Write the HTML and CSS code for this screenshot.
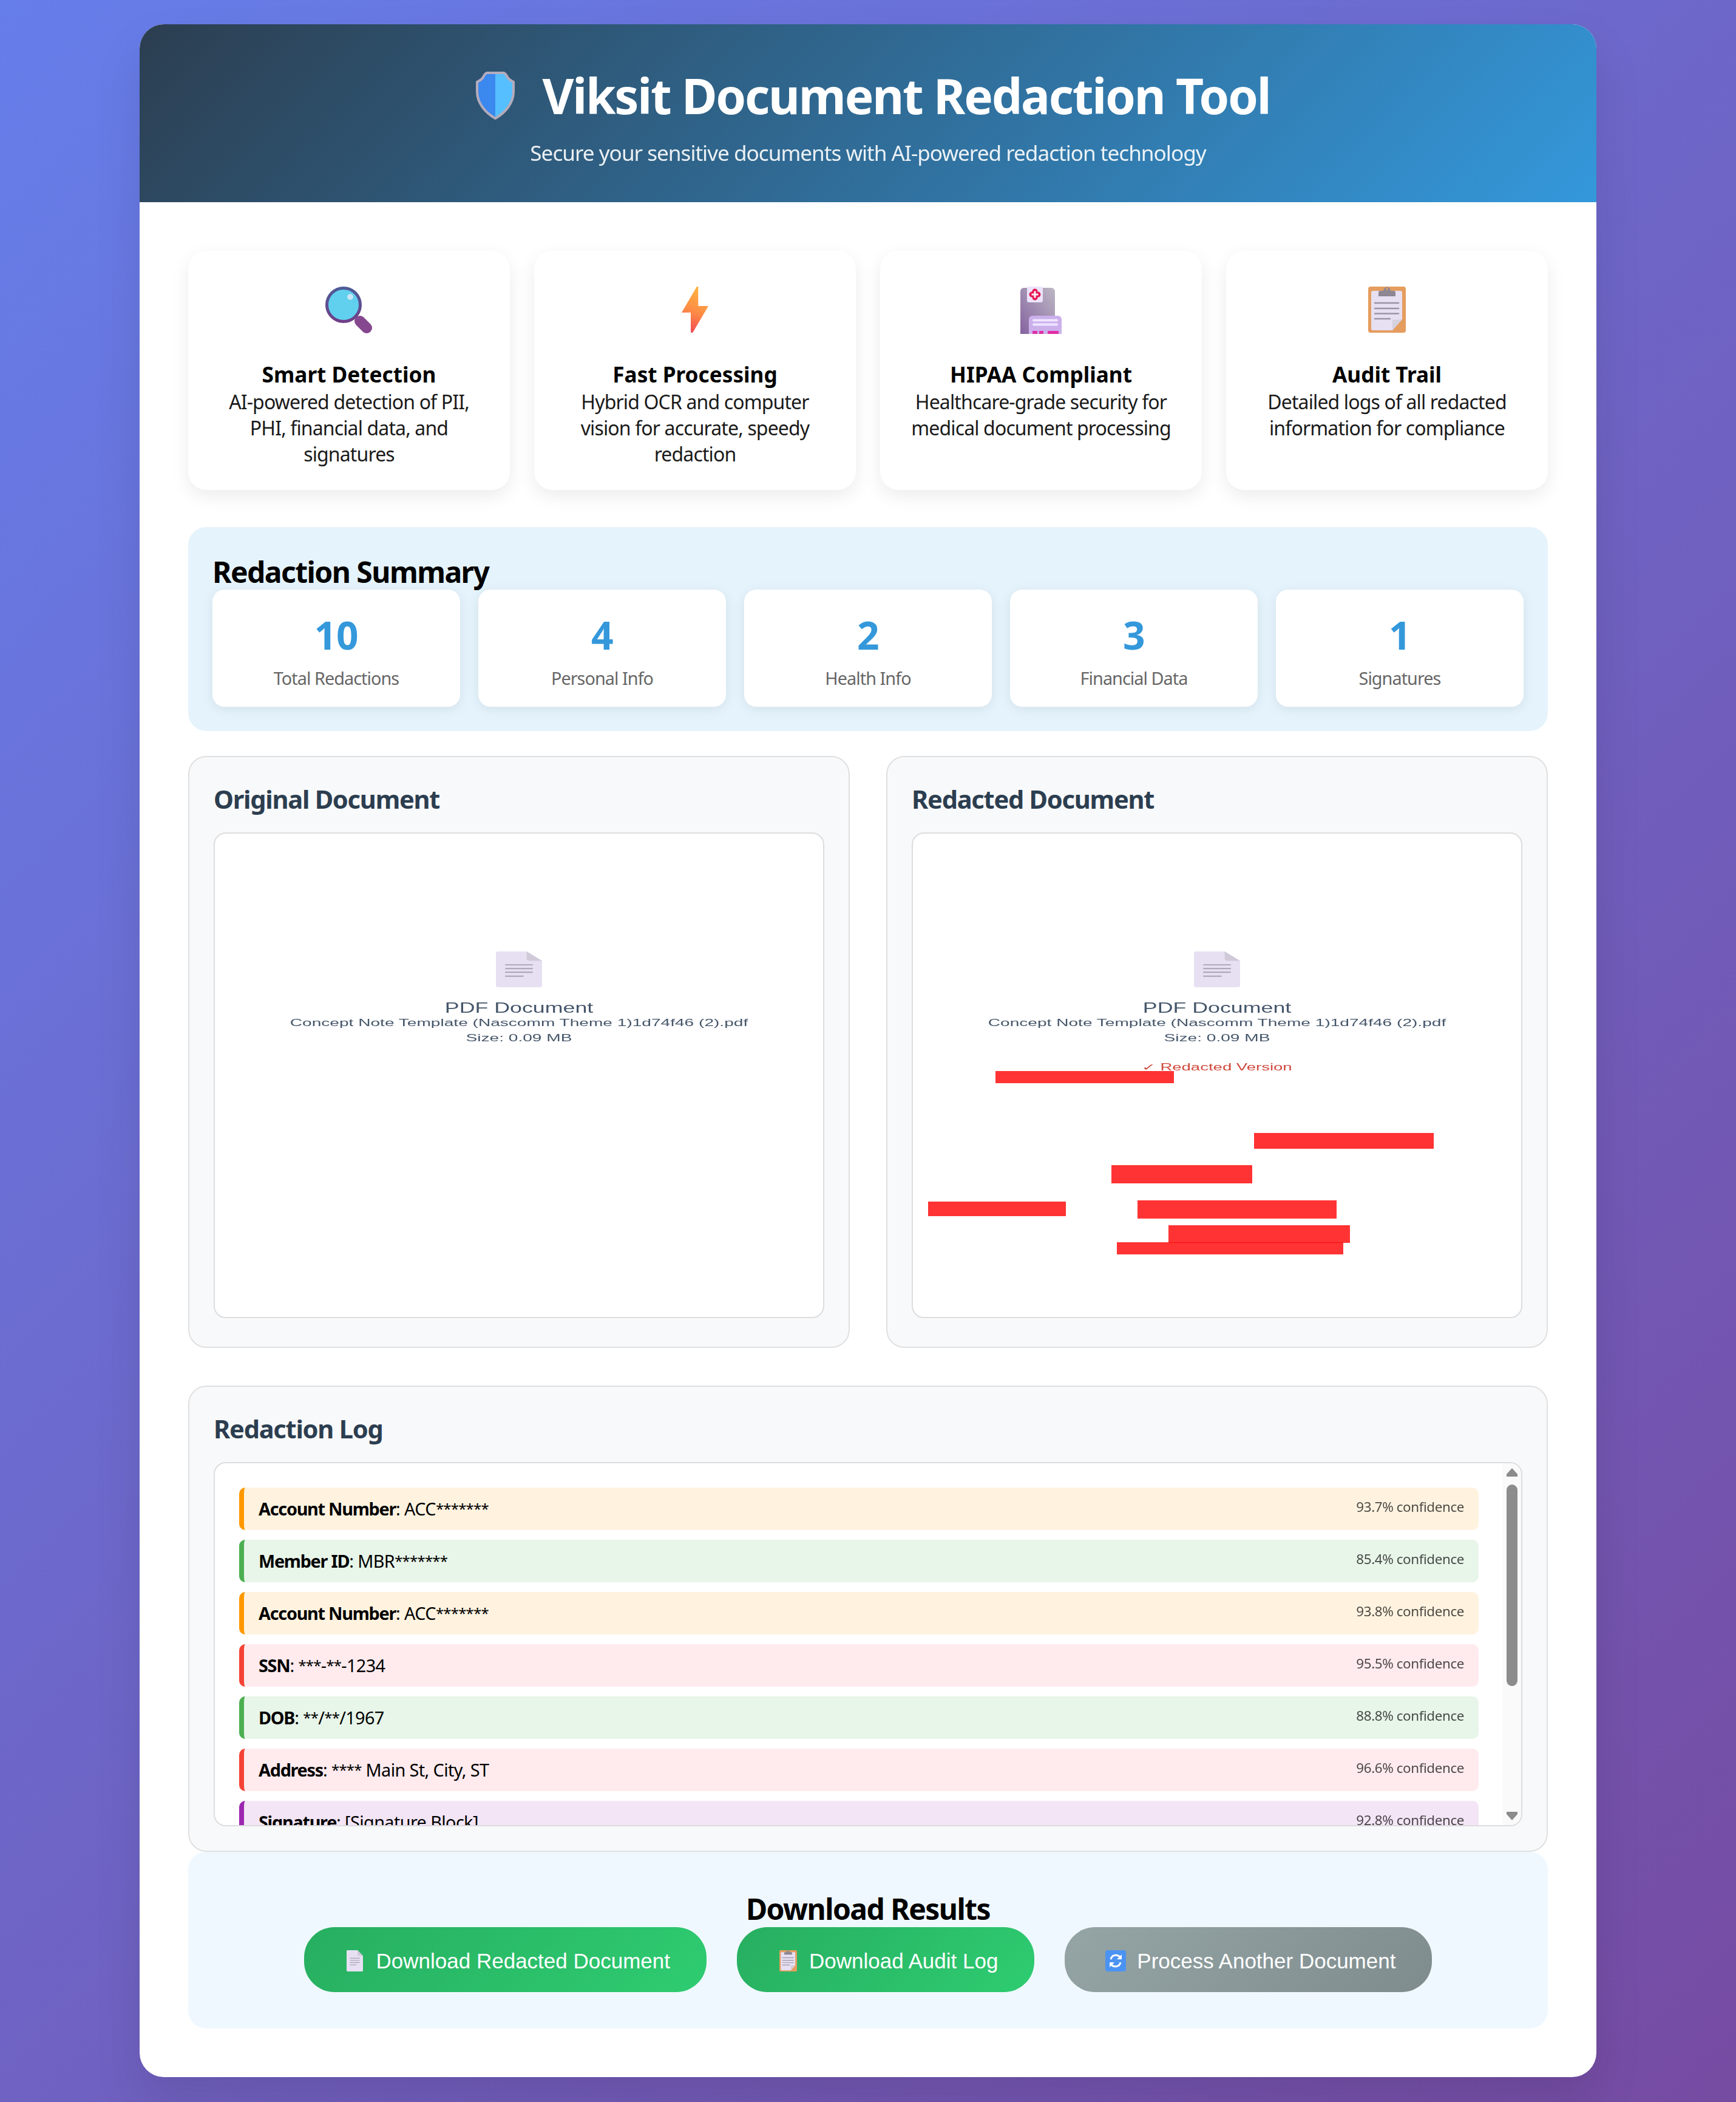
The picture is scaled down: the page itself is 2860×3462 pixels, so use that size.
FILE: index.html

```html
<!DOCTYPE html>
<html lang="en">
<head>
  <meta charset="UTF-8" />
  <meta name="viewport" content="width=device-width, initial-scale=1.0"/>
  <title>Viksit Document Redaction Tool</title>
  <link rel="stylesheet" href="styles.css">
</head>
<body>
  <svg class="icon-defs" aria-hidden="true">
    <defs>
      <linearGradient id="shieldFill" x1="0" y1="0" x2="1" y2="0">
        <stop offset="0.5" stop-color="#3b88ef"/>
        <stop offset="0.5" stop-color="#55bfff"/>
      </linearGradient>
      <linearGradient id="lensRing" x1="0" y1="0" x2="0" y2="1">
        <stop offset="0" stop-color="#4d5c97"/>
        <stop offset="1" stop-color="#703f88"/>
      </linearGradient>
      <linearGradient id="boltFill" x1="0.6" y1="0" x2="0.4" y2="1">
        <stop offset="0" stop-color="#ffb340"/>
        <stop offset="0.55" stop-color="#fd8c46"/>
        <stop offset="1" stop-color="#f14c52"/>
      </linearGradient>
      <linearGradient id="hospitalFill" x1="0" y1="1" x2="1" y2="0">
        <stop offset="0" stop-color="#85629f"/>
        <stop offset="1" stop-color="#bdb8c4"/>
      </linearGradient>
      <symbol id="docIcon" viewBox="0 0 30 36" preserveAspectRatio="none">
        <path d="M1.5 0H20L30 9.5V34.5A1.5 1.5 0 0 1 28.5 36H1.5A1.5 1.5 0 0 1 0 34.500V1.500A1.500 1.500 0 0 1 1.500 0Z" fill="#e6e0f2"/>
        <path d="M20 0L30 9.500H22A2 2 0 0 1 20 7.500Z" fill="#cfc9d8"/>
        <path d="M6 13.500H24M6 17.200H24M6 20.900H24M6 24.800H18" stroke="#a8a2b2" stroke-width="1.200" fill="none"/>
      </symbol>
      <symbol id="clipboardIcon" viewBox="0 0 62 76" preserveAspectRatio="none">
        <rect width="62" height="76" rx="4" fill="#e59d5f"/>
        <path d="M8 7H53A3 3 0 0 1 56 10V54L40 72H8A3 3 0 0 1 5 69V10A3 3 0 0 1 8 7Z" fill="#e6e0f2"/>
        <path d="M40 55L56 54L40 72Z" fill="#d5d0de"/>
        <path d="M17 10A3 3 0 0 1 20 7H25A6 6 0 1 1 37 7H42A3 3 0 0 1 45 10V16H17Z" fill="#8d8794"/>
        <circle cx="31" cy="4" r="1.800" fill="#e59d5f"/>
        <path d="M11 27H50M11 36H50M11 44.500H50M11 53H36" stroke="#9a94a4" stroke-width="2.600" stroke-linecap="round" fill="none"/>
      </symbol>
    </defs>
  </svg>

  <div class="container">
    <header class="header">
      <h1 class="title">
        <svg class="shield-icon" viewBox="0 0 64 79">
          <path d="M19 2H45C49 2 50 6 52 9C54 13 58 15 62 17V33C62 52 48 68 32 77C16 68 2 52 2 33V17C6 15 10 13 12 9C14 6 15 2 19 2Z" fill="url(#shieldFill)" stroke="#b4acbc" stroke-width="4"/>
        </svg>
        Viksit Document Redaction Tool
      </h1>
      <p class="subtitle">Secure your sensitive documents with AI-powered redaction technology</p>
    </header>

    <main class="content">
      <section class="features">
        <div class="feature-card">
          <div class="feature-icon">
            <svg class="icon-search" viewBox="0 0 78 78">
              <path d="M57 57L68 68" stroke="#85478d" stroke-width="18" stroke-linecap="round"/>
              <circle cx="30" cy="30" r="27.500" fill="#61cfee" stroke="url(#lensRing)" stroke-width="5"/>
              <ellipse cx="41" cy="17" rx="5" ry="5" fill="#c9e6f5"/>
            </svg>
          </div>
          <h3>Smart Detection</h3>
          <p>AI-powered detection of PII, PHI, financial data, and signatures</p>
        </div>
        <div class="feature-card">
          <div class="feature-icon">
            <svg class="icon-bolt" viewBox="0 0 44 76">
              <path d="M27.300 0V32H44L18.300 75.700H15V42.700H0L25 0Z" fill="url(#boltFill)"/>
            </svg>
          </div>
          <h3>Fast Processing</h3>
          <p>Hybrid OCR and computer vision for accurate, speedy redaction</p>
        </div>
        <div class="feature-card">
          <div class="feature-icon">
            <svg class="icon-hospital" viewBox="0 0 68 78">
              <path d="M6 2H51A6 6 0 0 1 57 8V78H0V8A6 6 0 0 1 6 2Z" fill="url(#hospitalFill)"/>
              <path d="M20 48H62A6 6 0 0 1 68 54V78H14V54A6 6 0 0 1 20 48Z" fill="#cbb0ec"/>
              <path d="M22 55.500H60M22 62.500H60" stroke="#efe4ff" stroke-width="4" stroke-linecap="round"/>
              <path d="M20 73H28V78H20ZM31 73H38V78H31ZM45 73H63V78H45Z" fill="#e02ea8"/>
              <rect x="11" width="26" height="26" rx="3" fill="#ece3fa"/>
              <path d="M19 13H29M24 8V18" stroke="#e8144f" stroke-width="9" stroke-linecap="round"/>
              <path d="M18.500 13H29.500M24 7.500V18.500" stroke="#f6eefb" stroke-width="3.200"/>
            </svg>
          </div>
          <h3>HIPAA Compliant</h3>
          <p>Healthcare-grade security for medical document processing</p>
        </div>
        <div class="feature-card">
          <div class="feature-icon">
            <svg class="icon-clipboard"><use href="#clipboardIcon"/></svg>
          </div>
          <h3>Audit Trail</h3>
          <p>Detailed logs of all redacted information for compliance</p>
        </div>
      </section>

      <section class="summary">
        <h3>Redaction Summary</h3>
        <div class="stats">
          <div class="stat-card"><div class="stat-number">10</div><div class="stat-label">Total Redactions</div></div>
          <div class="stat-card"><div class="stat-number">4</div><div class="stat-label">Personal Info</div></div>
          <div class="stat-card"><div class="stat-number">2</div><div class="stat-label">Health Info</div></div>
          <div class="stat-card"><div class="stat-number">3</div><div class="stat-label">Financial Data</div></div>
          <div class="stat-card"><div class="stat-number">1</div><div class="stat-label">Signatures</div></div>
        </div>
      </section>

      <section class="documents">
        <div class="panel doc-panel">
          <h3 class="panel-title">Original Document</h3>
          <div class="pdf-preview">
            <svg class="pdf-icon"><use href="#docIcon"/></svg>
            <div class="pdf-title">PDF Document</div>
            <div class="pdf-line">Concept Note Template (Nascomm Theme 1)1d74f46 (2).pdf</div>
            <div class="pdf-line">Size: 0.09 MB</div>
          </div>
        </div>
        <div class="panel doc-panel">
          <h3 class="panel-title">Redacted Document</h3>
          <div class="pdf-preview">
            <svg class="pdf-icon"><use href="#docIcon"/></svg>
            <div class="pdf-title">PDF Document</div>
            <div class="pdf-line">Concept Note Template (Nascomm Theme 1)1d74f46 (2).pdf</div>
            <div class="pdf-line">Size: 0.09 MB</div>
            <div class="pdf-line pdf-redacted">✓ Redacted Version</div>
            <span class="mark mark-1"></span>
            <span class="mark mark-2"></span>
            <span class="mark mark-3"></span>
            <span class="mark mark-4"></span>
            <span class="mark mark-5"></span>
            <span class="mark mark-6"></span>
            <span class="mark mark-7"></span>
          </div>
        </div>
      </section>

      <section class="panel log-panel">
        <h3 class="panel-title">Redaction Log</h3>
        <div class="log-box">
          <div class="log-list">
            <div class="log-row financial"><span><strong>Account Number</strong>: ACC<span class="mask">*******</span></span><span class="confidence">93.7% confidence</span></div>
            <div class="log-row health"><span><strong>Member ID</strong>: MBR<span class="mask">*******</span></span><span class="confidence">85.4% confidence</span></div>
            <div class="log-row financial"><span><strong>Account Number</strong>: ACC<span class="mask">*******</span></span><span class="confidence">93.8% confidence</span></div>
            <div class="log-row personal"><span><strong>SSN</strong>: <span class="mask">***</span>-<span class="mask">**</span>-1234</span><span class="confidence">95.5% confidence</span></div>
            <div class="log-row health"><span><strong>DOB</strong>: <span class="mask">**</span>/<span class="mask">**</span>/1967</span><span class="confidence">88.8% confidence</span></div>
            <div class="log-row personal"><span><strong>Address</strong>: <span class="mask">****</span> Main St, City, ST</span><span class="confidence">96.6% confidence</span></div>
            <div class="log-row signature"><span><strong>Signature</strong>: [Signature Block]</span><span class="confidence">92.8% confidence</span></div>
          </div>
          <div class="scrollbar">
            <svg class="scroll-arrow" viewBox="0 0 18 14"><path d="M9 0L18 10V14H0V10Z" fill="#8c8c8c"/></svg>
            <div class="scroll-thumb"></div>
            <svg class="scroll-arrow scroll-down" viewBox="0 0 18 14"><path d="M9 14L18 4V0H0V4Z" fill="#8c8c8c"/></svg>
          </div>
        </div>
      </section>

      <section class="downloads">
        <h3>Download Results</h3>
        <div class="download-buttons">
          <button class="btn btn-green">
            <span class="btn-icon"><svg class="btn-doc"><use href="#docIcon"/></svg></span>Download Redacted Document
          </button>
          <button class="btn btn-green">
            <span class="btn-icon"><svg class="btn-clip"><use href="#clipboardIcon"/></svg></span>Download Audit Log
          </button>
          <button class="btn btn-gray">
            <span class="btn-icon">
              <svg class="btn-refresh" viewBox="0 0 34 35">
                <rect width="34" height="35" rx="4" fill="#4b93f2"/>
                <path d="M9 15A8.500 8.500 0 0 1 25 13M25 20A8.500 8.500 0 0 1 9 22" stroke="#fff" stroke-width="3" fill="none"/>
                <path d="M27 7V15H19ZM7 28V20H15Z" fill="#fff"/>
              </svg>
            </span>Process Another Document
          </button>
        </div>
      </section>
    </main>
  </div>
</body>
</html>
```

FILE: styles.css

```css
* {
  margin: 0;
  padding: 0;
  box-sizing: border-box;
}

body {
  font-family: "Noto Sans", sans-serif;
  background: linear-gradient(135deg, #667eea 0%, #764ba2 100%);
  padding: 40px;
  min-height: 3462px;
}

.icon-defs {
  position: absolute;
  width: 0;
  height: 0;
}

.container {
  max-width: 2400px;
  margin: auto;
  background: #fff;
  border-radius: 40px;
  overflow: hidden;
  box-shadow: 0 40px 80px rgba(0,0,0,0.1);
}

.header {
  background: linear-gradient(135deg, #2c3e50 0%, #3498db 100%);
  color: #fff;
  text-align: center;
  padding: 64px 60px 0;
  height: 293px;
}

.title {
  display: flex;
  justify-content: center;
  align-items: center;
  gap: 46px;
  padding-left: 16px;
  font-size: 80px;
  line-height: 106px;
  font-weight: 700;
  letter-spacing: -2.24px;
  margin-bottom: 18px;
}

.shield-icon {
  width: 64px;
  height: 79px;
}

.subtitle {
  font-size: 35.2px;
  line-height: 47px;
  letter-spacing: -1.03px;
  opacity: 0.9;
}

.content {
  padding: 80px;
}

.features {
  display: grid;
  grid-template-columns: repeat(4, 1fr);
  gap: 40px;
  margin-bottom: 61px;
}

.feature-card {
  background: #fff;
  border-radius: 30px;
  padding: 40px;
  height: 394px;
  text-align: center;
  box-shadow: 0 10px 30px rgba(0,0,0,0.08);
}

.feature-icon {
  height: 139px;
  padding-top: 19px;
}

.feature-icon svg {
  display: block;
  margin: 0 auto;
}

.icon-search { width: 78px; height: 78px; }
.icon-bolt { width: 44px; height: 76px; }
.icon-hospital { width: 68px; height: 78px; }
.icon-clipboard { width: 62px; height: 76px; }

.feature-card h3 {
  font-size: 35.2px;
  line-height: 48px;
  font-weight: 700;
  color: #000;
}

.feature-card p {
  font-size: 32px;
  line-height: 43px;
  letter-spacing: -0.87px;
  color: #1a1a1a;
}

.summary {
  background: #e5f3fc;
  border-radius: 30px;
  padding: 40px;
  margin-bottom: 41px;
}

.summary h3,
.downloads h3 {
  font-size: 48px;
  font-weight: 700;
  letter-spacing: -1.55px;
  color: #000;
  padding-top: 4px;
}

.summary h3 {
  line-height: 59px;
}

.downloads h3 {
  line-height: 60px;
}

.stats {
  display: grid;
  grid-template-columns: repeat(5, 1fr);
  gap: 30px;
}

.stat-card {
  background: #fff;
  border-radius: 20px;
  padding: 32px 30px 0;
  height: 193px;
  text-align: center;
  box-shadow: 0 4px 20px rgba(0,0,0,0.08);
}

.stat-number {
  font-size: 64px;
  line-height: 85px;
  font-weight: 700;
  letter-spacing: -0.4px;
  color: #3498db;
}

.stat-label {
  font-size: 28.8px;
  line-height: 38px;
  margin-top: 10px;
  letter-spacing: -0.95px;
  color: #666;
}

.documents {
  display: grid;
  grid-template-columns: 1fr 1fr;
  gap: 60px;
  margin-bottom: 62px;
}

.panel {
  background: #f8f9fa;
  border: 2px solid #e0e0e0;
  border-radius: 30px;
  padding: 40px;
}

.doc-panel {
  padding-bottom: 47px;
}

.panel-title {
  font-size: 41.6px;
  line-height: 58px;
  font-weight: 700;
  letter-spacing: -1.24px;
  color: #2c3e50;
  margin-bottom: 26px;
}

.pdf-preview {
  position: relative;
  height: 800px;
  padding-top: 194px;
  background: #fff;
  border: 2px solid #ddd;
  border-radius: 20px;
  text-align: center;
  color: #45566a;
  font-family: "Liberation Sans", Arial, sans-serif;
}

.pdf-icon {
  display: block;
  width: 76px;
  height: 59px;
  margin: 0 auto 20px;
}

.pdf-title,
.pdf-line {
  filter: blur(0.4px);
}

.pdf-title {
  font-size: 24px;
  line-height: 27px;
  transform: scaleX(1.49);
}

.pdf-line {
  font-size: 16px;
  line-height: 24.5px;
  transform: scaleX(1.755);
}

.pdf-redacted {
  color: #d0493d;
  margin-top: 24px;
  transform: scaleX(1.72);
}

.mark {
  position: absolute;
  background: rgba(255,0,0,0.8);
}

.mark-1 { left: 136px; top: 391px; width: 294px; height: 20px; }
.mark-2 { left: 562px; top: 493px; width: 296px; height: 26px; }
.mark-3 { left: 327px; top: 546px; width: 232px; height: 30px; }
.mark-4 { left: 25px; top: 606px; width: 227px; height: 24px; }
.mark-5 { left: 370px; top: 604px; width: 328px; height: 30px; }
.mark-6 { left: 421px; top: 645px; width: 299px; height: 29px; }
.mark-7 { left: 336px; top: 673px; width: 373px; height: 20px; }

.log-box {
  display: flex;
  height: 600px;
  background: #fff;
  border: 2px solid #ddd;
  border-radius: 20px;
  overflow: hidden;
}

.log-list {
  flex: 1;
  padding: 40px;
  overflow: hidden;
}

.log-row {
  display: flex;
  justify-content: space-between;
  align-items: center;
  padding: 16px 24px;
  margin-bottom: 16px;
  border-left: 8px solid;
  border-radius: 10px;
  font-size: 28.8px;
  line-height: 38px;
  letter-spacing: -0.6px;
  color: #000;
}

.log-row strong {
  letter-spacing: -1.25px;
}

.log-row .mask {
  font-size: 24px;
  letter-spacing: -0.8px;
  vertical-align: 2px;
}

.log-row.financial { background: #fff3e0; border-color: #ff9800; }
.log-row.health { background: #e8f5e9; border-color: #4caf50; }
.log-row.personal { background: #ffebee; border-color: #f44336; }
.log-row.signature { background: #f3e5f5; border-color: #9c27b0; }

.confidence {
  font-size: 22.4px;
  line-height: 30px;
  letter-spacing: -0.4px;
  color: #000;
  opacity: 0.7;
  margin-top: -6px;
}

.scrollbar {
  position: relative;
  width: 30px;
  background: #fafafa;
  padding: 8px 6px;
}

.scroll-arrow {
  display: block;
  width: 18px;
  height: 14px;
}

.scroll-thumb {
  width: 18px;
  height: 332px;
  margin-top: 13px;
  background: #8c8c8c;
  border-radius: 9px;
}

.scroll-down {
  position: absolute;
  bottom: 8px;
}

.downloads {
  background: #f0f8ff;
  border-radius: 30px;
  padding: 60px;
  text-align: center;
}

.download-buttons {
  display: flex;
  justify-content: center;
  gap: 50px;
}

.btn {
  display: flex;
  align-items: center;
  height: 107px;
  padding: 4px 60px 0;
  border: none;
  border-radius: 50px;
  color: #fff;
  font-family: "Liberation Sans", Arial, sans-serif;
  font-size: 35px;
  cursor: pointer;
}

.btn-green {
  background: linear-gradient(135deg, #27ae60, #2ecc71);
}

.btn-gray {
  background: linear-gradient(135deg, #95a5a6, #7f8c8d);
}

.btn-icon {
  display: flex;
  justify-content: center;
  align-items: center;
  width: 48px;
  height: 36px;
  margin-right: 11px;
}

.btn-doc { width: 27px; height: 35px; }
.btn-clip { width: 29px; height: 35px; }
.btn-refresh { width: 34px; height: 35px; }
```
